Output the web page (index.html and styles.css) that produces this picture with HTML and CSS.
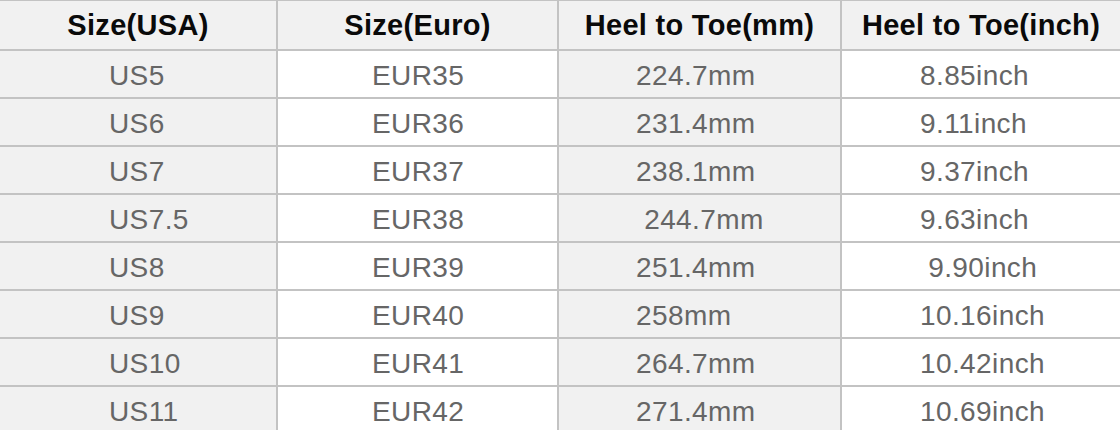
FILE: index.html
```html
<!DOCTYPE html>
<html>
<head>
<meta charset="utf-8">
<link rel="stylesheet" href="styles.css">
</head>
<body>
<div class="chart">
  <div class="cell head">Size(USA)</div>
  <div class="cell head">Size(Euro)</div>
  <div class="cell head">Heel to Toe(mm)</div>
  <div class="cell head">Heel to Toe(inch)</div>

  <div class="cell g c1">US5</div><div class="cell w c2">EUR35</div><div class="cell g c3">224.7mm</div><div class="cell w c4">8.85inch</div>
  <div class="cell g c1">US6</div><div class="cell w c2">EUR36</div><div class="cell g c3">231.4mm</div><div class="cell w c4">9.11inch</div>
  <div class="cell g c1">US7</div><div class="cell w c2">EUR37</div><div class="cell g c3">238.1mm</div><div class="cell w c4">9.37inch</div>
  <div class="cell g c1">US7.5</div><div class="cell w c2">EUR38</div><div class="cell g c3"> 244.7mm</div><div class="cell w c4">9.63inch</div>
  <div class="cell g c1">US8</div><div class="cell w c2">EUR39</div><div class="cell g c3">251.4mm</div><div class="cell w c4"> 9.90inch</div>
  <div class="cell g c1">US9</div><div class="cell w c2">EUR40</div><div class="cell g c3">258mm</div><div class="cell w c4">10.16inch</div>
  <div class="cell g c1">US10</div><div class="cell w c2">EUR41</div><div class="cell g c3">264.7mm</div><div class="cell w c4">10.42inch</div>
  <div class="cell g c1">US11</div><div class="cell w c2">EUR42</div><div class="cell g c3">271.4mm</div><div class="cell w c4">10.69inch</div>
</div>
</body>
</html>
```
FILE: styles.css
```css
html, body {
  margin: 0;
  padding: 0;
  background: #ffffff;
  overflow: hidden;
}
.chart {
  display: grid;
  grid-template-columns: 276px 279px 281px 1fr;
  grid-template-rows: 48px;
  grid-auto-rows: 46px;
  gap: 2px;
  padding-top: 1px;
  background: #c3c3c3;
  width: 1120px;
  font-family: "Liberation Sans", Arial, sans-serif;
}
.cell {
  display: flex;
  align-items: center;
  white-space: pre;
  font-size: 28px;
  letter-spacing: 0.4px;
  color: #666666;
  padding-top: 3px;
}
.head {
  justify-content: center;
  background: #f1f1f1;
  color: #0a0a0a;
  font-weight: bold;
  font-size: 29px;
  letter-spacing: 0.3px;
  padding-top: 0;
}
.g {
  background: #f1f1f1;
}
.w {
  background: #ffffff;
}
.c1 { padding-left: 109px; }
.c2 { padding-left: 94px; }
.c3 { padding-left: 77px; }
.c4 { padding-left: 78px; }
```
